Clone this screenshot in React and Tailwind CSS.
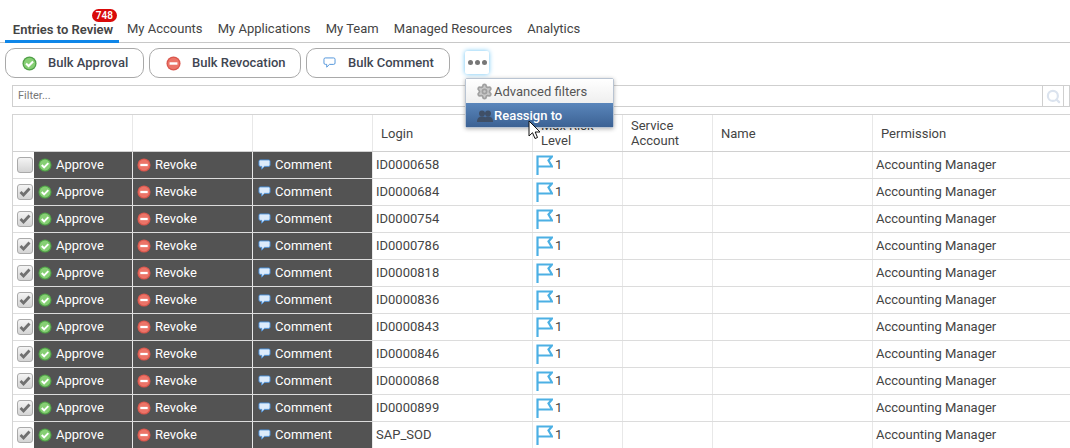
import React from "react";
import { Search, Settings } from "lucide-react";

const tabs = ["My Accounts", "My Applications", "My Team", "Managed Resources", "Analytics"];
const logins = ["ID0000658", "ID0000684", "ID0000754", "ID0000786", "ID0000818", "ID0000836", "ID0000843", "ID0000846", "ID0000868", "ID0000899", "SAP_SOD"];
const gridCols = "grid grid-cols-[120px_120px_120px_160px_90px_90px_160px_1fr]";

function ApproveIcon({ size = 14 }) {
    return (
        <svg width={size} height={size} viewBox="0 0 16 16" className="shrink-0">
            <circle cx="8" cy="8" r="7.500" fill="#4f9f47" />
            <circle cx="8" cy="8" r="6.200" fill="#86cf74" />
            <path d="M4.300 8l2.700 2.700L11.800 5.800" fill="none" stroke="#fff" strokeWidth="2.200" />
        </svg>
    );
}

function RevokeIcon({ size = 14 }) {
    return (
        <svg width={size} height={size} viewBox="0 0 16 16" className="shrink-0">
            <circle cx="8" cy="8" r="7.500" fill="#d9574d" />
            <circle cx="8" cy="8" r="6.200" fill="#ec7468" />
            <rect x="3.800" y="6.700" width="8.400" height="2.600" fill="#fff" />
        </svg>
    );
}

function CommentIcon({ fill = "#dcebfb", stroke = "#4a90d9" }) {
    return (
        <svg width="13" height="12" viewBox="0 0 14 13" className="shrink-0">
            <path
                d="M2.500 1h9A1.500 1.500 0 0 1 13 2.500v4A1.500 1.500 0 0 1 11.500 8H7l-3 3V8H2.500A1.500 1.500 0 0 1 1 6.500v-4A1.500 1.500 0 0 1 2.500 1z"
                fill={fill}
                stroke={stroke}
                strokeWidth="1"
            />
        </svg>
    );
}

function FlagIcon() {
    return (
        <svg width="17" height="20" viewBox="0 0 17 20" className="shrink-0">
            <path d="M1.500 20V1.500H16L12.500 5.500l3.500 6H1.500" fill="none" stroke="#4cb0e4" strokeWidth="2.200" />
        </svg>
    );
}

function UsersIcon() {
    return (
        <svg width="16" height="12" viewBox="0 0 16 12" className="shrink-0">
            <circle cx="5" cy="3.500" r="3" fill="#3f4f66" />
            <circle cx="11" cy="3.500" r="3" fill="#3f4f66" />
            <path d="M0 12c0-4 2-5.500 5-5.500s5 1.500 5 5.500z" fill="#3f4f66" />
            <path d="M7 12c0-4 1-5.500 4-5.500s5 1.500 5 5.500z" fill="#3f4f66" />
        </svg>
    );
}

function Checkbox({ checked }) {
    return (
        <div className="w-[16px] h-[16px] rounded-[3px] border border-[#aaa] bg-gradient-to-b from-[#f4f4f4] to-[#d4d4d4] flex items-center justify-center">
            {checked && (
                <svg width="12" height="10" viewBox="0 0 12 10">
                    <path d="M1.500 5l3 3L10.500 1.500" fill="none" stroke="#707070" strokeWidth="2.800" />
                </svg>
            )}
        </div>
    );
}

function BulkButton({ icon, label, width, gap }) {
    return (
        <button className={`h-[30px] ${width} ${gap} flex items-center pl-[16px] rounded-[10px] border border-[#a9a9a9] bg-white text-[13px] font-medium text-[#3f4652]`}>
            {icon}
            {label}
        </button>
    );
}

function Row({ login, checked }) {
    return (
        <div className={`${gridCols} h-[27px] border-b border-[#dcdcdc] text-[13px]`}>
            <div className="flex border-r border-[#e8e8e8]">
                <div className="w-[21px] pl-[4px] bg-white flex items-center">
                    <Checkbox checked={checked} />
                </div>
                <div className="flex-1 bg-[#535353] text-white flex items-center gap-[4px] pl-[4px]">
                    <ApproveIcon />
                    Approve
                </div>
            </div>
            <div className="bg-[#535353] text-white flex items-center gap-[4px] pl-[4px] border-r border-[#e8e8e8]">
                <RevokeIcon />
                Revoke
            </div>
            <div className="bg-[#535353] text-white flex items-center gap-[4px] pl-[5px] border-r border-[#e8e8e8]">
                <CommentIcon />
                Comment
            </div>
            <div className="flex items-center pl-[3px] border-r border-[#e8e8e8] text-[#444]">{login}</div>
            <div className="flex items-center gap-[2px] pl-[3px] border-r border-[#e8e8e8] text-[#444]">
                <FlagIcon />1
            </div>
            <div className="border-r border-[#e8e8e8]" />
            <div className="border-r border-[#e8e8e8]" />
            <div className="flex items-center pl-[3px] text-[#444]">Accounting Manager</div>
        </div>
    );
}

export default function App() {
    return (
        <div className="relative w-[1070px] h-[448px] overflow-hidden bg-white font-['Roboto',sans-serif]">
            {/* Tabs */}
            <div className="relative h-[43px] pl-[5px] flex items-end border-b border-[#c8c8c8]">
                <div className="relative h-[27px] w-[114px] pl-[2px] pt-[4px] text-center text-[13px] font-semibold text-[#444] border-b-[3px] border-[#0f86e8] -mb-px">
                    Entries to Review
                    <span className="absolute right-[2px] -top-[7px] h-[13px] px-[4px] rounded-full bg-[#d90a0a] text-white text-[10px] leading-[13px]">748</span>
                </div>
                <div className="flex gap-[15.2px] pl-[8px] h-[27px] pt-[4px] text-[13px] text-[#444]">
                    {tabs.map((tab) => (
                        <span key={tab}>{tab}</span>
                    ))}
                </div>
            </div>

            {/* Toolbar */}
            <div className="flex items-center h-[30px] mt-[5px] pl-[5px] gap-[5px]">
                <BulkButton icon={<ApproveIcon size={15} />} label="Bulk Approval" width="w-[139px]" gap="gap-[11px]" />
                <BulkButton icon={<RevokeIcon size={15} />} label="Bulk Revocation" width="w-[152px]" gap="gap-[11px]" />
                <BulkButton icon={<CommentIcon fill="#fff" />} label="Bulk Comment" width="w-[144px]" gap="gap-[12px]" />
                <button className="ml-[10px] -mt-[1px] w-[24px] h-[23px] rounded-[2px] bg-white flex items-center justify-center gap-[2px] shadow-[0_0_5px_#6cc4f5]">
                    <span className="w-[5px] h-[5px] rounded-full bg-[#777]" />
                    <span className="w-[5px] h-[5px] rounded-full bg-[#777]" />
                    <span className="w-[5px] h-[5px] rounded-full bg-[#777]" />
                </button>
            </div>

            {/* Filter */}
            <div className="ml-[12px] mt-[7px] h-[22px] flex border border-[#cfcfcf] text-[11px] text-[#777]">
                <div className="flex-1 pl-[5px] flex items-center">Filter...</div>
                <div className="w-[21px] flex items-center justify-center border-l border-[#cfcfcf]">
                    <Search size={15} strokeWidth={3.500} className="text-[#dbe3ee]" />
                </div>
                <div className="w-[6px] border-l border-[#cfcfcf]" />
            </div>

            {/* Table */}
            <div className="ml-[12px] mt-[7px] border-t border-l border-[#d4d4d4]">
                <div className={`${gridCols} h-[37px] border-b border-[#d0d0d0] text-[13px] text-[#444]`}>
                    <div className="border-r border-[#e8e8e8]" />
                    <div className="border-r border-[#e8e8e8]" />
                    <div className="border-r border-[#e8e8e8]" />
                    <div className="flex items-center pl-[8px] pt-[2px] border-r border-[#e8e8e8]">Login</div>
                    <div className="flex items-center pl-[8px] leading-[15px] border-r border-[#e8e8e8]">Max Risk<br />Level</div>
                    <div className="flex items-center pl-[8px] leading-[15px] border-r border-[#e8e8e8]">Service<br />Account</div>
                    <div className="flex items-center pl-[8px] pt-[2px] border-r border-[#e8e8e8]">Name</div>
                    <div className="flex items-center pl-[8px] pt-[2px]">Permission</div>
                </div>
                {logins.map((login, i) => (
                    <Row key={login} login={login} checked={i > 0} />
                ))}
            </div>

            {/* Dropdown menu */}
            <div className="absolute left-[465px] top-[78px] w-[149px] border border-[#b9c4d2] rounded-[2px] text-[13px] shadow-[0_1px_4px_rgba(0,0,0,0.3)]">
                <div className="h-[24px] flex items-center gap-[1px] pl-[10px] pt-[1px] bg-gradient-to-b from-white to-[#efefef] text-[#555]">
                    <Settings size={17} strokeWidth={2.500} className="text-[#a0a0a0] fill-[#c8c8c8] shrink-0" />
                    Advanced filters
                </div>
                <div className="h-[24px] flex items-center gap-[1px] pl-[11px] pt-[1px] bg-gradient-to-b from-[#5a86bb] to-[#3c6294] text-white font-medium">
                    <UsersIcon />
                    Reassign to
                </div>
            </div>

            {/* Mouse cursor */}
            <svg width="14" height="20" viewBox="0 0 14 20" className="absolute left-[528px] top-[120px]">
                <path d="M1 1v15l3.500-3.300L7 18.500l2.500-1L7.200 12H12z" fill="#fff" stroke="#111" strokeWidth="1" />
            </svg>
        </div>
    );
}
